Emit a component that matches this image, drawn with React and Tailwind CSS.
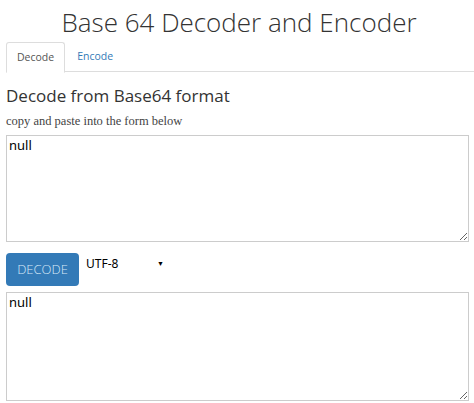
import { useState } from "react";

export default function App() {
  const [tab, setTab] = useState("decode");
  return (
    <div className="w-[474px] h-[403px] bg-white overflow-hidden font-['Open_Sans',sans-serif] text-[#333]">
      <h1 className="text-center text-[26px] leading-[34px] pt-[5px] pl-[4px] text-[#333] font-light">
        Base 64 Decoder and Encoder
      </h1>
      <div className="flex mt-[3px] ml-[6px] border-b border-[#ddd] h-[30px]">
        <button
          onClick={() => setTab("decode")}
          className="px-[10px] text-[10.5px] border border-[#ddd] border-b-white rounded-t-[3px] bg-white h-[31px] text-[#555]"
        >
          Decode
        </button>
        <button
          onClick={() => setTab("encode")}
          className="px-[12px] text-[10.5px] h-[30px] text-[#337ab7]"
        >
          Encode
        </button>
      </div>
      <div className="px-[6px]">
        <h2 className="text-[17px] leading-[22px] mt-[13px] font-normal text-[#333]">
          Decode from Base64 format
        </h2>
        <p className="text-[12.5px] leading-[14px] mt-[7px] font-['Liberation_Serif',serif] text-[#444]">
          copy and paste into the form below
        </p>
        <textarea
          defaultValue="null"
          className="block w-[463px] h-[107px] mt-[7px] border border-[#ccc] px-[2px] py-[1px] text-[13px] leading-[16px] text-black font-['Noto_Sans',sans-serif] outline-none"
        />
        <div className="flex items-start mt-[11px] h-[39px]">
          <button className="w-[73px] h-[33px] bg-[#337ab7] rounded-[4px] text-[#d8e9f7] text-[13px] font-light uppercase">
            Decode
          </button>
          <div className="flex items-center ml-[7px] mt-[2px] w-[80px] justify-between text-[12px] text-black font-['Noto_Sans',sans-serif]">
            <span>UTF-8</span>
            <span className="text-[7px] mr-[2px]">▼</span>
          </div>
        </div>
        <textarea
          defaultValue="null"
          className="block w-[463px] h-[109px] border border-[#ccc] px-[2px] py-[1px] text-[13px] leading-[16px] text-black font-['Noto_Sans',sans-serif] outline-none"
        />
      </div>
    </div>
  );
}
